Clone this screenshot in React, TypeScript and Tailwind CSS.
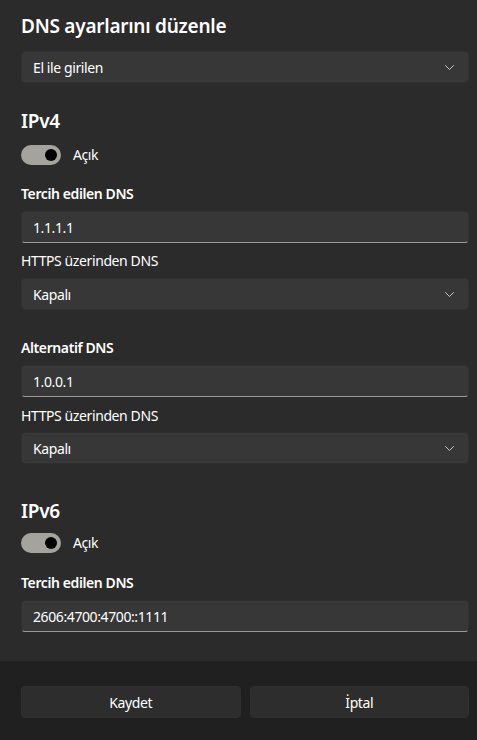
import React from "react";

const font = { fontFamily: '"Noto Sans", "Open Sans", sans-serif' };

function Chevron() {
  return (
    <svg width="9" height="5" viewBox="0 0 9 5" fill="none" className="shrink-0">
      <path d="M0.5 0.5 L4.5 4.5 L8.5 0.5" stroke="#c8c8c8" strokeWidth="1" strokeLinecap="round" strokeLinejoin="round" />
    </svg>
  );
}

function Select({ value, className = "" }: { value: string; className?: string }) {
  return (
    <div
      className={`flex h-[32px] items-center justify-between rounded-[4px] border border-[#303030] bg-[#373737] pl-[11px] pr-[14px] text-[14px] tracking-[-0.4px] text-white ${className}`}
    >
      <span>{value}</span>
      <Chevron />
    </div>
  );
}

function Field({ value, className = "" }: { value: string; className?: string }) {
  return (
    <div
      className={`flex h-[32px] items-center rounded-[4px] border border-[#303030] border-b-[#9a9a9a] bg-[#373737] pl-[11px] text-[14px] tracking-[-0.4px] text-white ${className}`}
    >
      {value}
    </div>
  );
}

function Toggle({ className = "" }: { className?: string }) {
  return (
    <div className={`flex h-[20px] items-center gap-[12px] ${className}`}>
      <div className="flex h-[20px] w-[40px] items-center justify-end rounded-full bg-[#a5a39e] pr-[4px]">
        <div className="h-[12px] w-[12px] rounded-full bg-black" />
      </div>
      <span className="text-[14px] leading-[20px] tracking-[-0.4px] text-white">Açık</span>
    </div>
  );
}

function Label({ children, bold = false, className = "" }: { children: React.ReactNode; bold?: boolean; className?: string }) {
  return (
    <div className={`h-[20px] text-[14px] leading-[20px] tracking-[-0.4px] text-white ${bold ? "font-semibold" : ""} ${className}`}>
      {children}
    </div>
  );
}

function Heading({ children, className = "" }: { children: React.ReactNode; className?: string }) {
  return (
    <div className={`h-[28px] text-[19px] font-semibold leading-[28px] tracking-[-0.25px] text-white ${className}`}>
      {children}
    </div>
  );
}

export default function App() {
  return (
    <div className="flex h-[740px] w-[477px] flex-col overflow-hidden bg-[#202020]" style={font}>
      <div className="flex h-[661px] flex-col bg-[#2b2b2b] pl-[21px] pr-[8px] pt-[12px]">
        <Heading>DNS ayarlarını düzenle</Heading>
        <Select value="El ile girilen" className="mt-[11px]" />

        <Heading className="mt-[24px]">IPv4</Heading>
        <Toggle className="mt-[10px]" />
        <Label bold className="mt-[19px]">Tercih edilen DNS</Label>
        <Field value="1.1.1.1" className="mt-[7px]" />
        <Label className="mt-[8px]">HTTPS üzerinden DNS</Label>
        <Select value="Kapalı" className="mt-[7px]" />

        <Label bold className="mt-[28px]">Alternatif DNS</Label>
        <Field value="1.0.0.1" className="mt-[7px]" />
        <Label className="mt-[9px]">HTTPS üzerinden DNS</Label>
        <Select value="Kapalı" className="mt-[6px]" />

        <Heading className="mt-[33px]">IPv6</Heading>
        <Toggle className="mt-[8px]" />
        <Label bold className="mt-[20px]">Tercih edilen DNS</Label>
        <Field value="2606:4700:4700::1111" className="mt-[7px]" />
      </div>
      <div className="flex gap-[9px] pl-[21px] pr-[8px] pt-[25px]">
        <button className="h-[32px] flex-1 rounded-[4px] border border-[#2f2f2f] bg-[#2d2d2d] text-[14px] tracking-[-0.4px] text-white">
          Kaydet
        </button>
        <button className="h-[32px] flex-1 rounded-[4px] border border-[#2f2f2f] bg-[#2d2d2d] text-[14px] tracking-[-0.4px] text-white">
          İptal
        </button>
      </div>
    </div>
  );
}
